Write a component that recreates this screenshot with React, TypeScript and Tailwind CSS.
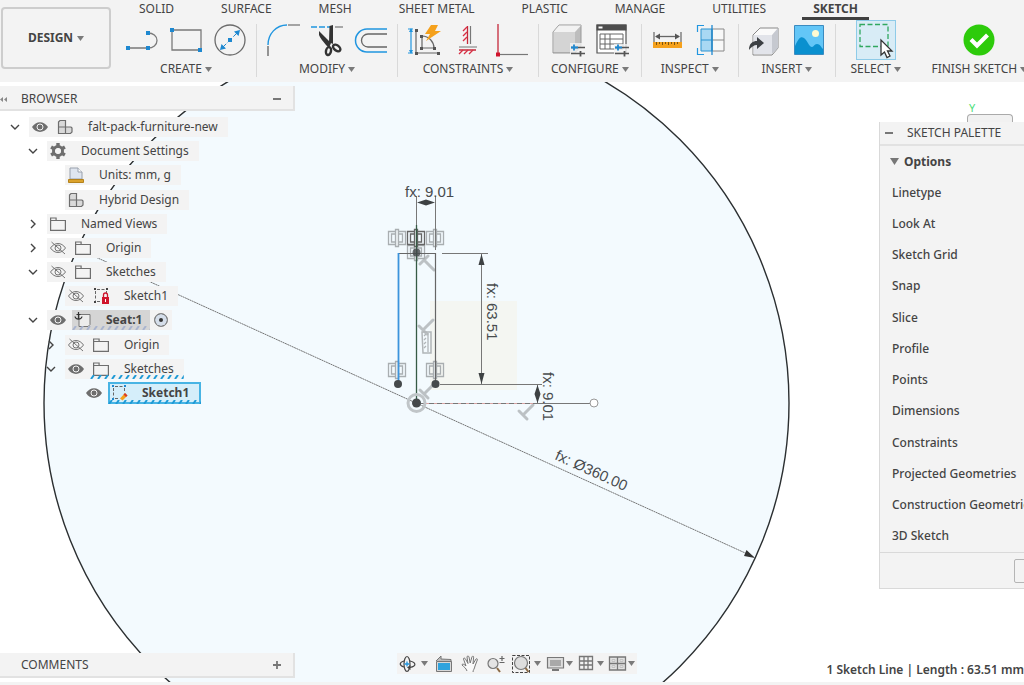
import { ReactNode } from "react";
import clsx from "clsx";

type IconProps = {
    children: ReactNode,
    className?: string,
    box?: string
}

function Icon({ children, className = "size-8", box = "0 0 32 32" }: IconProps) {
    return <svg viewBox={box} className={clsx("shrink-0 overflow-visible", className)} fill="none" aria-hidden="true">{children}</svg>
}

function Caret() {
    return <Icon className="h-[5px] w-[7px]" box="0 0 7 5"><path d="M0 0h7L3.500 5z" fill="#7a7a7a" /></Icon>
}

/* ---------- toolbar icons ---------- */

const lineIcon = (
    <Icon>
        <path d="M2 24h20M22 9c5 0 9 3 9 7.500s-4 7.500-9 7.500" stroke="#7a7a7a" strokeWidth="1.300" />
        <path d="M0 22h4v4H0zM20 22h4v4h-4zM20 7h4v4h-4z" fill="#1e88d0" />
    </Icon>
)

const rectangleIcon = (
    <Icon>
        <path d="M2 6h29v20H2z" stroke="#7a7a7a" strokeWidth="1.300" />
        <path d="M0 4h4v4H0zM28 24h4v4h-4z" fill="#1e88d0" />
    </Icon>
)

const circleIcon = (
    <Icon>
        <circle cx="16" cy="16" r="15" stroke="#6b6b6b" strokeWidth="1.300" />
        <path d="M8 24 24 8" stroke="#1e88d0" strokeDasharray="6 2" />
        <path d="M14 14h4v4h-4zM26 6l-1.500 6L20 7.500zM6 26l6-1.500L7.500 20z" fill="#1e88d0" />
    </Icon>
)

const filletIcon = (
    <Icon>
        <path d="M1 21C1 10 9 1 20 1" stroke="#2196e0" strokeWidth="1.400" />
        <path d="M1 22v10M21 1h12" stroke="#555" strokeWidth="1.200" />
    </Icon>
)

const trimIcon = (
    <Icon>
        <path d="M0 3h20" stroke="#2196e0" strokeWidth="1.300" strokeDasharray="6 2" />
        <path d="M24 3h8" stroke="#777" strokeWidth="1.200" />
        <path d="M18.500 2 22 1v19l-4-2zM8 7l12 12-2 5-3-3c-3-4-6-7-7-10z" fill="#333" />
        <ellipse cx="17.500" cy="27" rx="2.500" ry="4" stroke="#333" strokeWidth="2.400" transform="rotate(12 17 27)" />
        <ellipse cx="25.500" cy="23.500" rx="4.200" ry="2.600" stroke="#333" strokeWidth="2.400" transform="rotate(38 25 24)" />
    </Icon>
)

const offsetIcon = (
    <Icon>
        <path d="M32 5H12a11.500 11.500 0 0 0 0 23h20" stroke="#2196e0" strokeWidth="1.500" />
        <path d="M32 10H13a6.500 6.500 0 0 0 0 13h19" stroke="#666" strokeWidth="1.300" />
    </Icon>
)

const autoConstrainIcon = (
    <Icon>
        <path d="M3 5v24M0 5h5M0 29h5" stroke="#2196e0" strokeWidth="1.200" />
        <path d="M3 4l2 4H1zM3 30l2-4H1z" fill="#2196e0" />
        <path d="M8 6v23h22M14 12v12h12c0-6-5-12-12-12" stroke="#666" strokeWidth="1.200" />
        <path d="M7 5h3v3H7zM7 28h3v3H7zM29 28h3v3h-3zM12 11h3v3h-3zM12 23h3v3h-3zM25 23h3v3h-3z" fill="#555" />
        <path d="M23 1h7l-3 6h6L18 17l4-7h-5z" fill="#f5a11c" />
    </Icon>
)

const fixIcon = (
    <Icon>
        <path d="M15.500 2v18M7 26h17" stroke="#c5283a" strokeWidth="1.300" />
        <path d="M15 3l-4 4M15 8l-4 4M15 13l-4 4M11 26l-4 4M16 26l-4 4M21 26l-4 4" stroke="#d83045" strokeWidth="1.300" />
        <path d="M18.500 2v18M7 23h18" stroke="#777" strokeWidth="1.200" />
    </Icon>
)

const coincidentIcon = (
    <Icon>
        <path d="M2 0v29" stroke="#c5283a" strokeWidth="1.300" />
        <path d="M4 30.500h28" stroke="#777" strokeWidth="1.200" />
        <path d="M0 28.500h4v4H0z" fill="#d0142c" />
    </Icon>
)

const sliders = (
    <>
        <path d="M19 23.500h14M19 29.500h14" stroke="#555" strokeWidth="1.600" />
        <path d="M28.500 27v5.500" stroke="#555" strokeWidth="1.800" />
        <path d="M19 23.500h7M22 20.500v6" stroke="#1e88d0" strokeWidth="1.800" />
    </>
)

const configureIcon = (
    <Icon>
        <path d="M1 8l6-7h22v21l-6 7H1z" fill="#bdbdbd" stroke="#999" />
        <path d="M1.500 8 7 1.500h22L23 8z" fill="#f2f2f2" />
        <path d="M1.500 8H23v20H1.500z" fill="#d4d4d4" />
        <path d="M18 19h14v13H18z" fill="#f3f3f3" opacity=".8" />
        {sliders}
    </Icon>
)

const tableIcon = (
    <Icon>
        <path d="M1 1h29v28H1z" fill="#fff" stroke="#555" strokeWidth="1.200" />
        <path d="M.500.500h30v6H.500z" fill="#4d4d4d" />
        <path d="M2.500 2.500h4v2h-4z" fill="#fff" />
        <path d="M4 10h23v15H4zM4 15h23M4 20h23M9 10v15M14 10v15" stroke="#666" />
        <path d="M18 20h14v12H18z" fill="#f3f3f3" opacity=".8" />
        {sliders}
    </Icon>
)

const measureIcon = (
    <Icon>
        <path d="M2 8v10M29 8v10" stroke="#666" strokeWidth="1.200" />
        <path d="M4 12.500h23" stroke="#666" strokeWidth="1.300" />
        <path d="M3 12.500l5-3v6zM28 12.500l-5-3v6z" fill="#555" />
        <path d="M1 18h29v6H1z" fill="#f5a11c" />
        <path d="M4.500 18v3M7.500 18v2M10.500 18v3M13.500 18v2M16.500 18v3M19.500 18v2M22.500 18v3M25.500 18v2" stroke="#7a5410" />
    </Icon>
)

const interferenceIcon = (
    <Icon>
        <path d="M5 5h11v22H5z" fill="#a9d8f3" />
        <path d="M16 5h12v22H16zM16 16h12" fill="#f8f8f8" stroke="#888" />
        <path d="M5 5h11v22H5zM5 16h11" stroke="#2a93d1" />
        <path d="M16 1v30" stroke="#1e88d0" strokeWidth="1.300" />
        <path d="M8 1.500H1.500V8M8 30.500H1.500V24" stroke="#2196e0" strokeWidth="1.200" />
    </Icon>
)

const insertIcon = (
    <Icon>
        <path d="M4 11 11 4h18v20l-6 7H4z" fill="#fafafa" stroke="#888" />
        <path d="M4.500 11H23v19H4.500z" fill="#e2e4ea" />
        <path d="M23 11l6-7v20l-6 6z" fill="#c6c9d0" />
        <path d="M0 26c0-7 4-9 8-9v-4l7 6-7 6v-4c-3 0-6 2-8 5z" fill="#3c4044" />
    </Icon>
)

const pictureIcon = (
    <Icon>
        <path d="M1.500 1.500h29v29h-29z" fill="#63c6f7" stroke="#3b8bc0" />
        <path d="M2 22c4-9 6-10 9-8 4 3 5 9 8 9 2 0 2-3 5-3s4 3 6 5v5H2z" fill="#0a90cf" />
        <circle cx="22.500" cy="9.500" r="3.500" fill="#fffbd2" />
    </Icon>
)

const selectIcon = (
    <Icon className="size-9" box="0 0 36 36">
        <path d="M2 1.500h28v22H2z" stroke="#30a860" strokeWidth="1.300" strokeDasharray="5 2.500" />
        <path d="M23 17v15l3.500-3 2.500 5.500 3-1.500-2.500-5H34z" fill="#fff" stroke="#333" strokeWidth="1.300" />
    </Icon>
)

const finishIcon = (
    <Icon>
        <circle cx="16" cy="16" r="15.500" fill="#2dcb0b" />
        <path d="M8 15.500l6 6L24.500 11" stroke="#fff" strokeWidth="4.200" />
    </Icon>
)

/* ---------- browser tree icons ---------- */

const gray = "#6e6e6e"

const eye = (
    <Icon className="size-4" box="0 0 16 16">
        <path d="M0 8c4-6.500 12-6.500 16 0-4 6.500-12 6.500-16 0z" fill={gray} />
        <circle cx="8" cy="8" r="3" stroke="#f3f3f3" />
    </Icon>
)

const eyeOff = (
    <Icon className="size-4" box="0 0 16 16">
        <path d="M.500 8c4-6 11-6 15 0-4 6-11 6-15 0zM1.500 2l13.500 12" stroke="#777" />
        <circle cx="8" cy="8" r="3" stroke="#777" />
    </Icon>
)

const partsIcon = (
    <Icon className="size-4" box="0 0 16 16">
        <path d="M1.500 3 3 1.500h5.500V8H14l1 1v4l-1.500 1.500h-12zM1.500 8h7v6.500" fill="#d9d9d9" stroke={gray} strokeWidth="1.200" />
    </Icon>
)

const gearIcon = (
    <Icon className="size-4" box="0 0 16 16">
        <circle cx="8" cy="8" r="4.500" stroke={gray} strokeWidth="3" />
        <path d="M8 0v4M8 12v4M1.100 4l3.400 2M11.500 10l3.400 2M1.100 12l3.400-2M11.500 6l3.400-2" stroke={gray} strokeWidth="3.400" />
        <circle cx="8" cy="8" r="2.800" fill="#f3f3f3" />
    </Icon>
)

const unitsIcon = (
    <Icon className="size-4" box="0 0 16 16">
        <path d="M2 1h8l4 4v7H2z" fill="#dfe5ef" stroke="#98a0ac" />
        <path d="M10 1v4h4" fill="#fff" stroke="#98a0ac" />
        <path d="M.500 12.500h15v3H.500z" fill="#dba22c" stroke="#b4821c" />
    </Icon>
)

const folderIcon = (
    <Icon className="size-4" box="0 0 16 16">
        <path d="M.600 4.500h14.800v9.900H.600zM.600 4.500V2h5.500v2.500" stroke={gray} strokeWidth="1.200" />
    </Icon>
)

const sketchFrame = <path d="M2.500 3v9.500M4 1.500h9M13.500 3v4M4 13.500h4" stroke="#666" strokeDasharray="3 1.500" />

const lockedSketchIcon = (
    <Icon className="size-4" box="0 0 16 16">
        {sketchFrame}
        <path d="M1 0h2v2H1zM13 0h2v2h-2zM1 13h2v2H1z" fill="#444" />
        <path d="M9 9h7v7H9z" fill="#d0142c" />
        <path d="M10.500 9V7a2 2 0 0 1 4 0v2" stroke="#d0142c" strokeWidth="1.300" />
        <path d="M12.500 11v3" stroke="#fff" />
    </Icon>
)

const activeSketchIcon = (
    <Icon className="size-4" box="0 0 16 16">
        {sketchFrame}
        <path d="M1 0h2v2H1zM13 0h2v2h-2zM1 13h2v2H1z" fill="#1e88d0" />
        <path d="M9 13.500 14 8l2.500 2.500-5 5z" fill="#f5a11c" />
        <path d="M14 8l2.500 2.500-1.500 1.500-2.500-2.500z" fill="#d63a2c" />
    </Icon>
)

const componentIcon = (
    <Icon className="size-4" box="0 0 16 16">
        <path d="M4 2.500h11v10l-2 2H4z" fill="#ececec" stroke="#777" />
        <path d="M3.500 0v6.500M1.500 2.500h4M0 4.500c.500 3.500 6.500 3.500 7 0" stroke="#333" strokeWidth="1.200" />
    </Icon>
)

/* ---------- navigation bar icons ---------- */

const orbitIcon = (
    <Icon className="size-[18px]" box="0 0 18 18">
        <ellipse cx="8" cy="9" rx="3" ry="7.500" stroke="#444" strokeWidth="1.200" />
        <path d="M5 6C0 7.500 0 10.500 5 12M11 6c6 1.500 7 5 0 6.500" stroke="#444" strokeWidth="1.200" />
        <path d="M11.500 10v5L8 12.500z" fill="#444" />
        <path d="M5.500 9h5M8 6.500v5" stroke="#2196e0" strokeWidth="1.300" />
    </Icon>
)

const lookAtIcon = (
    <Icon className="size-[18px]" box="0 0 18 18">
        <path d="M1 6 6 1v3l10 .500V7" fill="#bbb" stroke="#777" />
        <path d="M1.500 6.500h15v10h-15z" fill="#d8d8d8" stroke="#777" />
        <path d="M3 8h12v7H3z" fill="#2fa3dd" />
    </Icon>
)

const panIcon = (
    <Icon className="size-[18px]" box="0 0 18 18">
        <path d="M6 16c-1-3-3-4-5-6 0-1.500 2-1 4 1L2.500 4c0-1.500 1.500-1 2 0L7 8.500 6 2c.200-1.500 1.700-1.200 2 0l1.200 6L11 1.800c.500-1 1.800-.800 1.600.400L12 9l3-5c.800-.700 1.800 0 1.300 1L14 11c-.500 3-2 4-2 6" fill="#fafafa" stroke="#777" />
    </Icon>
)

const zoomIcon = (
    <Icon className="size-[18px]" box="0 0 18 18">
        <circle cx="6" cy="8.500" r="5" fill="#e4e4e4" stroke="#777" strokeWidth="1.200" />
        <path d="M12.500 3.500h5M15 1v5M12.500 7.500h5" stroke="#666" strokeWidth="1.200" />
        <path d="m10 13 3 4" stroke="#8a6a45" strokeWidth="2" />
    </Icon>
)

const zoomWindowIcon = (
    <Icon className="size-[18px]" box="0 0 18 18">
        <path d="M.500.500h17v17H.500z" stroke="#444" strokeDasharray="3 1.500" />
        <circle cx="9" cy="8" r="6.500" fill="#dedede" stroke="#777" strokeWidth="1.200" />
        <path d="m13.500 13 3 4" stroke="#8a6a45" strokeWidth="2" />
    </Icon>
)

const displayIcon = (
    <Icon className="size-[17px]" box="0 0 17 17">
        <path d="M.500 2.500h16v10.500H.500z" fill="#ddd" stroke="#777" strokeWidth="1.200" />
        <path d="M3 5h11v6H3z" fill="#a9a9a9" />
        <path d="M5 14h7v2H5z" fill="#777" />
    </Icon>
)

const gridIcon = (
    <Icon className="size-[17px]" box="0 0 17 17">
        <path d="M1.500 1.500h13v13h-13zM1.500 6h13M1.500 10h13M6 1.500v13M10 1.500v13" stroke="#777" strokeWidth="1.300" />
    </Icon>
)

const viewportsIcon = (
    <Icon className="size-[17px]" box="0 0 17 17">
        <path d="M.500 2h16v13H.500zM.500 8.500h16M8.500 2v13" fill="#e2e2e2" stroke="#777" strokeWidth="1.300" />
        <path d="M3 4.500h3v2H3zM11 4.500h3v2h-3zM3 10.500h3v2H3zM11 10.500h3v2h-3z" stroke="#c2c2c2" />
    </Icon>
)

/* ---------- data ---------- */

const tabs = ["SOLID", "SURFACE", "MESH", "SHEET METAL", "PLASTIC", "MANAGE", "UTILITIES", "SKETCH"]

type Group = {
    label: string,
    tools: { name: string, icon: ReactNode }[],
    pad?: string
}

const groups: Group[] = [
    { label: "CREATE", tools: [{ name: "Line", icon: lineIcon }, { name: "Rectangle", icon: rectangleIcon }, { name: "Circle", icon: circleIcon }] },
    { label: "MODIFY", tools: [{ name: "Fillet", icon: filletIcon }, { name: "Trim", icon: trimIcon }, { name: "Offset", icon: offsetIcon }] },
    { label: "CONSTRAINTS", tools: [{ name: "Auto constrain", icon: autoConstrainIcon }, { name: "Fix", icon: fixIcon }, { name: "Coincident", icon: coincidentIcon }] },
    { label: "CONFIGURE", tools: [{ name: "Configure", icon: configureIcon }, { name: "Table", icon: tableIcon }], pad: "px-3" },
    { label: "INSPECT", tools: [{ name: "Measure", icon: measureIcon }, { name: "Interference", icon: interferenceIcon }] },
    { label: "INSERT", tools: [{ name: "Insert", icon: insertIcon }, { name: "Canvas", icon: pictureIcon }] },
]

type Node = {
    label: string,
    indent: string,
    icon: ReactNode,
    open?: boolean,
    visible?: boolean,
    state?: "component" | "edited" | "selected"
}

const nodes: Node[] = [
    { label: "falt-pack-furniture-new", indent: "pl-0", icon: partsIcon, open: true, visible: true },
    { label: "Document Settings", indent: "pl-[18px]", icon: gearIcon, open: true },
    { label: "Units: mm, g", indent: "pl-9", icon: unitsIcon },
    { label: "Hybrid Design", indent: "pl-9", icon: partsIcon },
    { label: "Named Views", indent: "pl-[18px]", icon: folderIcon, open: false },
    { label: "Origin", indent: "pl-[18px]", icon: folderIcon, open: false, visible: false },
    { label: "Sketches", indent: "pl-[18px]", icon: folderIcon, open: true, visible: false },
    { label: "Sketch1", indent: "pl-9", icon: lockedSketchIcon, visible: false },
    { label: "Seat:1", indent: "pl-[18px]", icon: componentIcon, open: true, visible: true, state: "component" },
    { label: "Origin", indent: "pl-9", icon: folderIcon, open: false, visible: false },
    { label: "Sketches", indent: "pl-9", icon: folderIcon, open: true, visible: true, state: "edited" },
    { label: "Sketch1", indent: "pl-[54px]", icon: activeSketchIcon, visible: true, state: "selected" },
]

const options = [
    "Linetype", "Look At", "Sketch Grid", "Snap", "Slice", "Profile", "Points", "Dimensions",
    "Constraints", "Projected Geometries", "Construction Geometries", "3D Sketch",
]

/* ---------- toolbar ---------- */

function ToolGroup({ label, tools, pad = "px-2.5" }: Group) {
    return (
        <div className={clsx("flex shrink-0 flex-col items-center gap-[5px] border-r border-[#d9d9d9]", pad)}>
            <div className="flex gap-3">
                {tools.map((t) => <button key={t.name} type="button" aria-label={t.name}>{t.icon}</button>)}
            </div>
            <Caption label={label} />
        </div>
    )
}

function Caption({ label }: { label: string }) {
    return <button type="button" className="flex h-4 items-center gap-[3px] leading-4">{label}<Caret /></button>
}

function Toolbar() {
    return (
        <header className="flex overflow-hidden bg-[#f3f3f3] pb-[5px] whitespace-nowrap">
            <button type="button" className="mt-[7px] mr-[5px] ml-px flex h-[62px] w-[110px] shrink-0 items-center justify-center gap-1 rounded border-2 border-[#cdcdcd] font-bold">
                DESIGN<Caret />
            </button>
            <div className="min-w-0 flex-1">
                <nav className="flex gap-[25px] pl-3">
                    {tabs.map((tab) => (
                        <button key={tab} type="button" className={clsx("h-5 border-b-3 px-[11px] pt-px leading-4", tab === "SKETCH" ? "border-[#404040] font-bold" : "border-transparent")}>
                            {tab}
                        </button>
                    ))}
                </nav>
                <div className="flex pt-1">
                    {groups.map((g) => <ToolGroup key={g.label} {...g} />)}
                    <div className="-mt-1 flex w-20 shrink-0 flex-col items-center">
                        <button type="button" aria-label="Select" className="mb-px flex size-10 justify-center border border-[#8ecbe8] bg-[#d8ecf6] pt-0.5">{selectIcon}</button>
                        <Caption label="SELECT" />
                    </div>
                    <div className="flex w-[127px] shrink-0 flex-col items-center gap-[5px]">
                        <button type="button" aria-label="Finish sketch">{finishIcon}</button>
                        <Caption label="FINISH SKETCH" />
                    </div>
                </div>
            </div>
        </header>
    )
}

/* ---------- browser ---------- */

function Hatch({ color }: { color: string }) {
    return (
        <svg className="absolute bottom-0 left-0 h-1 w-full" aria-hidden="true">
            <defs>
                <pattern id={"hatch" + color.slice(1)} width="7" height="4" patternUnits="userSpaceOnUse">
                    <path d="M1 4 4 0" stroke={color} strokeWidth="2" />
                </pattern>
            </defs>
            <rect width="100%" height="4" fill={`url(#hatch${color.slice(1)})`} />
        </svg>
    )
}

function TreeRow({ label, indent, icon, open, visible, state }: Node) {
    return (
        <li className={clsx("flex h-5 items-center", indent)}>
            {open === undefined ? <span className="w-[29px]" /> : (
                <button type="button" aria-label={open ? "Collapse" : "Expand"} aria-expanded={open} className="flex w-[29px] justify-center">
                    <Icon className="size-2.5" box="0 0 10 10">
                        <path d={open ? "M1 3l4 4 4-4" : "M3 1l4 4-4 4"} stroke="#444" strokeWidth="1.400" />
                    </Icon>
                </button>
            )}
            <div className={clsx("flex h-5 items-center", state !== "selected" && "bg-[#f3f3f3]")}>
                {visible !== undefined && (
                    <button type="button" aria-label={"Toggle " + label} className="mr-[3px] flex w-[22px] justify-center">{visible ? eye : eyeOff}</button>
                )}
                <button type="button" className={clsx(
                    "relative flex items-center",
                    !state && "h-5 pr-2.5",
                    state === "component" && "h-5 bg-[#d5d5d5] pr-2 font-bold",
                    state === "edited" && "h-5 pr-2.5",
                    state === "selected" && "h-[22px] bg-[#d5eefa] pr-3 font-bold outline-2 -outline-offset-2 outline-[#48b4e4]",
                )}>
                    <span className="mr-3 flex w-[22px] justify-center">{icon}</span>
                    {label}
                    {state && <Hatch color={state === "component" ? "#a9b4cf" : "#1e9ad6"} />}
                </button>
                {state === "component" && (
                    <input type="radio" name="active" defaultChecked aria-label="Activate Seat:1" className="mr-1 ml-1 size-3.5 appearance-none rounded-full border border-[#888] bg-[#333] ring-4 ring-[#d5deea] ring-inset" />
                )}
            </div>
        </li>
    )
}

function Browser() {
    return (
        <section className="w-[295px] shrink-0">
            <div className="flex h-[25px] items-center border-r-2 border-b-2 border-[#e2e2e2] bg-[#f3f3f3] pt-[3px] pr-3">
                <button type="button" aria-label="Collapse browser" className="mr-3.5">
                    <Icon className="h-[5px] w-[7px]" box="0 0 7 5"><path d="M3 0v5L0 2.500zM7 0v5L4 2.500z" fill="#888" /></Icon>
                </button>
                <h2>BROWSER</h2>
                <button type="button" aria-label="Minimize browser" className="ml-auto h-0.5 w-2 bg-[#777]" />
            </div>
            <ul className="mt-1.5 flex h-[286px] flex-col justify-between">
                {nodes.map((n, i) => <TreeRow key={i} {...n} />)}
            </ul>
        </section>
    )
}

/* ---------- sketch palette ---------- */

function Palette() {
    return (
        <aside className="flex w-[145px] shrink-0 flex-col">
            <div className="flex h-10 items-end">
                <span className="mb-1.5 ml-[90px] text-[11px] leading-4 text-[#4be079]">Y</span>
                <button type="button" aria-label="View cube" className="-ml-2 h-2 w-[46px] rounded-t border border-b-0 border-[#aaa] bg-[#f1f1f1]" />
            </div>
            <div className="overflow-hidden border-b border-l border-[#d9d9d9] bg-[#f3f3f3] whitespace-nowrap">
                <div className="flex h-6 items-center gap-3.5 border-b-2 border-[#e2e2e2] pl-[5px]">
                    <button type="button" aria-label="Minimize palette" className="h-0.5 w-2 bg-[#777]" />
                    <h2>SKETCH PALETTE</h2>
                </div>
                <button type="button" className="flex h-[31px] items-center gap-[5px] pl-2.5 font-bold">
                    <Icon className="h-[7px] w-[9px]" box="0 0 9 7"><path d="M0 0h9L4.500 7z" fill="#777" /></Icon>
                    Options
                </button>
                <ul className="grid h-[376px] grid-rows-12 items-center border-b border-[#d9d9d9] pl-3 font-medium">
                    {options.map((o) => <li key={o}>{o}</li>)}
                </ul>
                <div className="flex h-[35px] items-center pl-[134px]">
                    <button type="button" aria-label="Finish Sketch" className="h-6 w-24 shrink-0 rounded-xs border border-[#b5b5b5]" />
                </div>
            </div>
        </aside>
    )
}

/* ---------- canvas ---------- */

function Symmetry({ x, y, dark }: { x: number, y: number, dark?: boolean }) {
    return (
        <g transform={`translate(${x} ${y})`} stroke={dark ? "#666" : "#a9aeb1"} fill="none" strokeWidth="1.300">
            <path d="M-2-6.500h-6.500v13H-2M2-6.500h6.500v13H2M-2-4h-3.500v8H-2M2-4h3.500v8H2" />
            <path d="M-1.500-8.500h3v17h-3z" fill="#eef3f5" />
        </g>
    )
}

function Perpendicular({ x, y, turn = 0 }: { x: number, y: number, turn?: number }) {
    return <path transform={`translate(${x} ${y}) rotate(${turn})`} d="M-4-4 4 4M0 0 10-10" stroke="#bcc1c4" strokeWidth="3" strokeLinecap="round" />
}

function Drawing() {
    return (
        <svg className="absolute inset-0 size-full" viewBox="0 82 1024 600" preserveAspectRatio="xMinYMin slice" fill="none" role="img" aria-label="Sketch canvas">
            <circle cx="416.500" cy="403" r="372.500" fill="#f3fafe" stroke="#2b2f31" strokeWidth="1.400" />
            <path d="M430 301h87v89h-87z" fill="#f4f6f2" />
            <path d="M78 249 754 557" stroke="#666" strokeWidth=".900" strokeDasharray="2 .500" />
            <path d="m755 558-11-2 2.500-6z" fill="#333" />

            <Perpendicular x={424} y={260} turn={90} />
            <Perpendicular x={423} y={330} />
            <Perpendicular x={424} y={394} />
            <Perpendicular x={523} y={415} />
            <path d="M422 332h9v21h-8z" stroke="#b0b5b8" strokeWidth="1.500" />
            <path d="M428 333v19M424 336l2-2M424 340l2-2M424 344l2-2M424 348l2-2" stroke="#b0b5b8" strokeWidth="1.300" />
            <Symmetry x={397} y={238} />
            <Symmetry x={435} y={238} />
            <Symmetry x={416} y={252} />
            <Symmetry x={416} y={238} dark />
            <Symmetry x={397} y={370} />
            <Symmetry x={435} y={370} />

            <path d="M416.500 196v57M435.500 196v54M442 253.500h46M481.500 253v131M440 384.500h102M537.500 384v19" stroke="#777" />
            <path d="M398 253.500h37.500v131" stroke="#666" strokeWidth="1.200" />
            <path d="M416.500 225v178" stroke="#365b45" strokeWidth="1.300" />
            <path d="M398.500 253v131" stroke="#3c94dc" strokeWidth="1.800" />
            <path d="M421 403.500h112" stroke="#d9a5a5" strokeWidth="1.200" />
            <path d="M421 403.500h112" stroke="#777" strokeDasharray="5 3" />
            <path d="M533 403.500h57" stroke="#777" />
            <circle cx="594" cy="403" r="4" fill="#fff" stroke="#999" />

            <path d="M417 202.500l9-3v6zM435 202.500l-9-3v6zM481.500 254l-3 11h6zM481.500 384l-3-11h6zM537.500 385l-3 9h6zM537.500 403l-3-9h6z" fill="#3d4143" />
            <circle cx="416.500" cy="403" r="8.500" stroke="#c0c5c8" strokeWidth="3" />
            <circle cx="416.500" cy="403" r="4.500" fill="#45494b" />
            <circle cx="398" cy="384" r="4" fill="#45494b" />
            <circle cx="435.500" cy="384" r="4" fill="#45494b" />
            <circle cx="416.500" cy="252.500" r="4" fill="#45494b" opacity=".8" />

            <g fill="#484c4e" className="font-['Liberation_Sans',sans-serif] text-[15px]">
                <text x="405" y="197">fx: 9.01</text>
                <text transform="translate(487 283) rotate(90)">fx: 63.51</text>
                <text transform="translate(543 372) rotate(90)">fx: 9.01</text>
                <text transform="translate(554 459) rotate(24.500)">fx: Ø360.00</text>
            </g>
        </svg>
    )
}

function NavButton({ name, icon, menu, gap = "gap-1" }: { name: string, icon: ReactNode, menu?: boolean, gap?: string }) {
    return (
        <button type="button" aria-label={name} className={clsx("flex items-center justify-center", menu ? gap : "w-5")}>
            {icon}{menu && <Caret />}
        </button>
    )
}

function BottomBar() {
    return (
        <footer className="relative mt-auto mb-1 flex items-start whitespace-nowrap">
            <div className="flex h-[25px] w-[295px] shrink-0 items-center justify-between border-r-2 border-b-2 border-[#e2e2e2] bg-[#f3f3f3] pt-px pr-3 pl-[21px]">
                <h2>COMMENTS</h2>
                <button type="button" aria-label="Add comment">
                    <Icon className="size-2" box="0 0 8 8"><path d="M0 4h8M4 0v8" stroke="#777" strokeWidth="1.800" /></Icon>
                </button>
            </div>
            <div className="ml-[102px] flex h-[21px] shrink-0 items-center gap-1.5 bg-[#f3f3f3] px-0.5">
                <NavButton name="Orbit" icon={orbitIcon} menu />
                <NavButton name="Look at" icon={lookAtIcon} />
                <NavButton name="Pan" icon={panIcon} />
                <NavButton name="Zoom" icon={zoomIcon} />
                <NavButton name="Zoom window" icon={zoomWindowIcon} menu />
                <div className="flex gap-[5px]">
                    <NavButton name="Display settings" icon={displayIcon} menu gap="gap-0.5" />
                    <NavButton name="Grid and snaps" icon={gridIcon} menu gap="gap-0.5" />
                    <NavButton name="Viewports" icon={viewportsIcon} menu gap="gap-0.5" />
                </div>
            </div>
            <p className="ml-auto self-end leading-4 font-semibold">1 Sketch Line | Length : 63.51 mm</p>
        </footer>
    )
}

export default function App() {
    return (
        <div className="flex min-h-screen flex-col overflow-hidden bg-white font-['Noto_Sans',sans-serif] text-xs text-[#444]">
            <Toolbar />
            <main className="relative flex flex-1 flex-col">
                <Drawing />
                <div className="relative flex items-start justify-between">
                    <div className="pt-1"><Browser /></div>
                    <Palette />
                </div>
                <BottomBar />
            </main>
            <div className="h-[3px] bg-[#f3f3f3]" />
        </div>
    )
}
